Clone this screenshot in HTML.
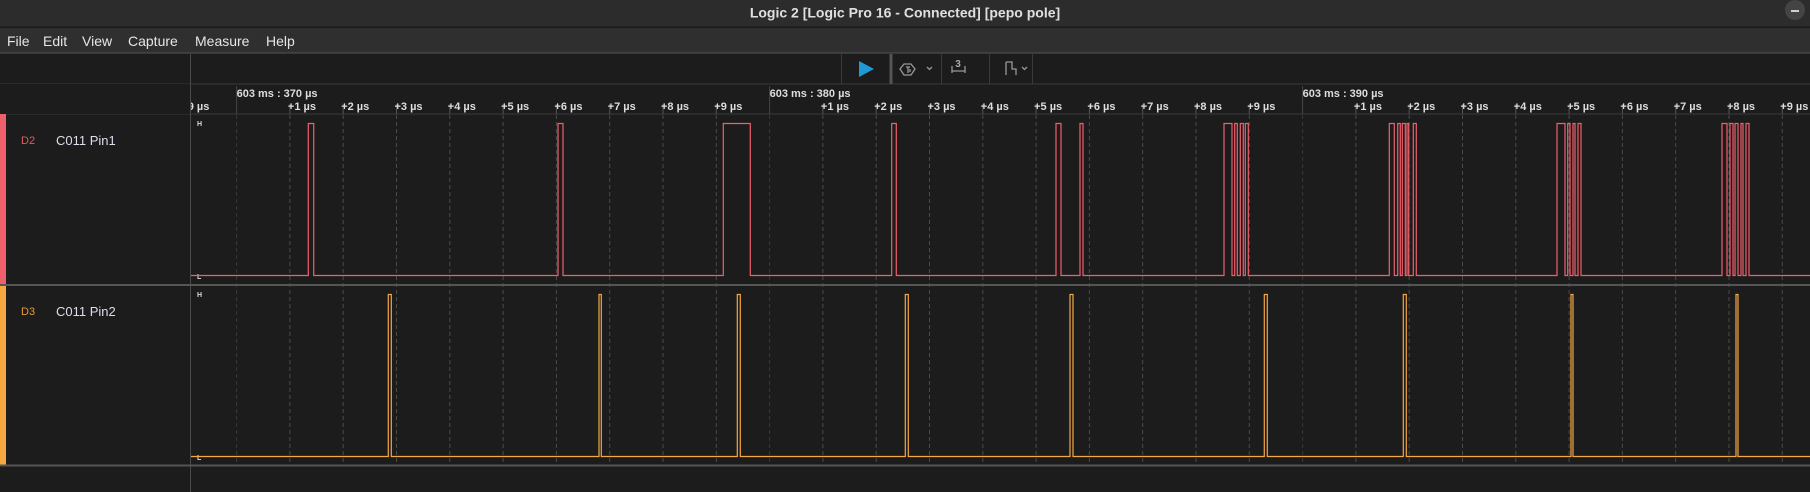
<!DOCTYPE html>
<html><head><meta charset="utf-8"><style>
html,body{margin:0;padding:0;background:#1c1c1c;width:1810px;height:492px;overflow:hidden;font-family:"Liberation Sans",sans-serif}
svg{position:absolute;left:0;top:0}
</style></head><body>
<svg id="s" width="1810" height="492" xmlns="http://www.w3.org/2000/svg" font-family="Liberation Sans, sans-serif">
<rect x="0" y="0" width="1810" height="492" fill="#1c1c1c"/>
<rect x="0" y="0" width="1810" height="27" fill="#2c2c2c"/>
<line x1="0" y1="27" x2="1810" y2="27" stroke="#1a1a1a"/>
<text x="905" y="14" fill="#e0e0e0" font-size="14" font-weight="bold" text-anchor="middle" dominant-baseline="middle">Logic 2 [Logic Pro 16 - Connected] [pepo pole]</text>
<circle cx="1795" cy="10" r="10" fill="#444"/>
<line x1="1791" y1="11" x2="1799" y2="11" stroke="#fff" stroke-width="1.5"/>
<rect x="0" y="28" width="1810" height="25" fill="#2f2f2f"/>
<line x1="0" y1="53" x2="1810" y2="53" stroke="#555"/>
<g fill="#e6e6e6" font-size="14">
<text x="7" y="46">File</text><text x="43" y="46">Edit</text><text x="82" y="46">View</text><text x="128" y="46">Capture</text><text x="195" y="46">Measure</text><text x="266" y="46">Help</text>
</g>
<rect x="0" y="54" width="1810" height="30" fill="#1c1c1c"/>
<line x1="0" y1="84" x2="1810" y2="84" stroke="#3a3a3a"/>
<g stroke="#3a3a3a"><line x1="841.5" y1="54" x2="841.5" y2="84"/><line x1="941.5" y1="54" x2="941.5" y2="84"/><line x1="989.5" y1="54" x2="989.5" y2="84"/><line x1="1032.5" y1="54" x2="1032.5" y2="84"/></g>
<line x1="891" y1="54" x2="891" y2="84" stroke="#555" stroke-width="3"/>
<polygon points="859,61 874,69 859,77" fill="#1e9ad6"/>
<g fill="none" stroke="#999" stroke-width="1.3">
<polygon points="904,64 911,64 915,69 911,75 904,75 900,69"/>
<path d="M906 67h4M908 67v6M910 69v3"/>
<path d="M927 67l2.5 2.5 2.5-2.5"/>
<path d="M952 66v7M952 71h13M965 66v7"/>
<path d="M1006 62h6v7h4v6M1006 62v13"/>
<path d="M1022 67l2.5 2.5 2.5-2.5"/>
</g>
<text x="958" y="67" fill="#aaa" font-size="10" font-weight="bold" text-anchor="middle">3</text>
<line x1="0" y1="114" x2="1810" y2="114" stroke="#3a3a3a"/>
<g id="grid"></g>
<rect x="0" y="84" width="190" height="30" fill="#1c1c1c"/>
<line x1="190.5" y1="54" x2="190.5" y2="492" stroke="#4a4a4a"/>
<rect x="0" y="114" width="6" height="171" fill="#f0606c"/>
<rect x="0" y="286" width="6" height="179" fill="#f5a742"/>
<line x1="0" y1="285" x2="1810" y2="285" stroke="#555" stroke-width="2"/>
<line x1="0" y1="465.5" x2="1810" y2="465.5" stroke="#555" stroke-width="2"/>
<text x="21" y="144" fill="#e05a66" font-size="11">D2</text>
<text x="56" y="145" fill="#dde" font-size="13">C011 Pin1</text>
<text x="21" y="315" fill="#e89a3a" font-size="11">D3</text>
<text x="56" y="316" fill="#dde" font-size="13">C011 Pin2</text>
<g fill="#ddd" font-size="7" font-weight="bold">
<text x="197" y="126">H</text><text x="197" y="279">L</text>
<text x="197" y="297">H</text><text x="197" y="460">L</text>
</g>
<path id="d2" fill="none" stroke="#f0606c" stroke-width="1.2"/>
<path id="d3" fill="none" stroke="#f5a742" stroke-width="1.2"/>
</svg>
<script>
var NS="http://www.w3.org/2000/svg",g=document.getElementById('grid');
function el(t,a,txt){var e=document.createElementNS(NS,t);for(var k in a)e.setAttribute(k,a[k]);if(txt)e.textContent=txt;g.appendChild(e);return e;}
for(var k=-1;k<30;k++){var x=236.6+k*53.3;
 var m=((k%10)+10)%10;
 if(m==0){el('line',{x1:x,y1:86,x2:x,y2:114,stroke:'#444'});el('text',{x:x,y:97,fill:'#ddd','font-size':'11','font-weight':'bold'},'603 ms : '+(370+k)+' µs');}
 else{el('line',{x1:x,y1:104,x2:x,y2:114,stroke:'#555'});el('text',{x:x-2,y:110,fill:'#ddd','font-size':'11','font-weight':'bold'},'+'+m+' µs');}
 if(x>191) el('line',{x1:x,y1:115,x2:x,y2:465,stroke:m==0?'#3a3a3a':'#4a4a4a','stroke-dasharray':'4 3'});
}
function wave(id,p,H,L){var d='M191 '+L;p.forEach(function(q){d+=' H'+q[0]+' V'+H+' H'+q[1]+' V'+L;});d+=' H1810';document.getElementById(id).setAttribute('d',d);}
wave('d2',[[308.3,313.7],[558,563],[723.3,750.3],[891.7,896.3],[1056,1061],[1080,1083],[1224,1232],[1234.7,1237.3],[1240.3,1243.3],[1245.3,1248.3],[1389.3,1394.3],[1397.7,1400.3],[1402.3,1405.3],[1407,1408.7],[1413.3,1416.3],[1557,1565],[1567.7,1570],[1573,1575],[1578,1581],[1722,1727],[1730,1733],[1735,1738],[1741,1743],[1746,1749]],123.5,275.5);
wave('d3',[[388.3,391.3],[599,601.3],[737.3,740.3],[905.3,908.3],[1070,1073],[1264.3,1267.3],[1403.3,1406.3],[1571,1573],[1736,1738]],294.5,456.5);
</script>
</body></html>
